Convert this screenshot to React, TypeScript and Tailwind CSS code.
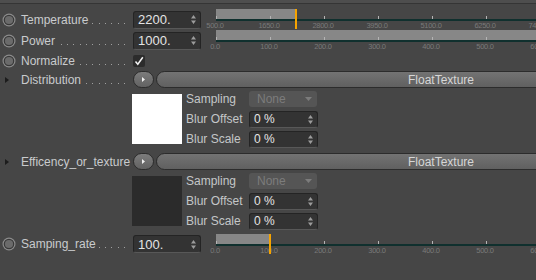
import React from 'react';

const TEMP_TICKS = ['500.0', '1650.0', '2800.0', '3950.0', '5100.0', '6250.0', '7400.0'];
const RATE_TICKS = ['0.0', '100.0', '200.0', '300.0', '400.0', '500.0', '600.0'];

function Radio() {
  return (
    <svg width="14" height="14" viewBox="0 0 14 14">
      <circle cx="7" cy="7" r="6.5" fill="#8c8c8c" />
      <circle cx="7" cy="7" r="5.3" fill="#393939" />
      <circle cx="7" cy="7" r="4.1" fill="#6b6b6b" />
    </svg>
  );
}

function Arrow() {
  return (
    <svg width="4" height="6" viewBox="0 0 4 6">
      <path d="M0 0 L4 3 L0 6 Z" fill="#1c1c1c" />
    </svg>
  );
}

function Spin() {
  return (
    <svg width="5" height="9" viewBox="0 0 5 9">
      <path d="M2.5 0 L5 3.5 H0 Z M2.5 9 L0 5.5 H5 Z" fill="#9c9c9c" />
    </svg>
  );
}

function Leader() {
  // dotted leader, dots right-aligned to the field column
  return (
    <div className="ml-[3px] mt-[7px] h-[1px] min-w-0 flex-1 bg-[repeating-linear-gradient(to_left,#a0a0a0_0_1px,transparent_1px_6.33px)]" />
  );
}

function Label({ icon, text }: { icon: 'radio' | 'arrow'; text: string }) {
  return (
    <div className="flex w-[133px] shrink-0 items-center pr-[8px]">
      <div className={icon === 'radio' ? 'flex w-[21px] shrink-0 pl-[2px]' : 'flex w-[21px] shrink-0 pl-[5px]'}>
        {icon === 'radio' ? <Radio /> : <Arrow />}
      </div>
      <span className="shrink-0 whitespace-nowrap text-[12px] text-[#c9cbcd]">{text}</span>
      <Leader />
    </div>
  );
}

function NumField({ value }: { value: string }) {
  return (
    <div className="flex h-[18px] w-[68px] shrink-0 items-center justify-between rounded-[3px] border border-[#242424] border-b-[#585858] bg-[#333333] pl-[4px] pr-[4px]">
      <span className="text-[13px] leading-none text-[#e4e4e4]">{value}</span>
      <Spin />
    </div>
  );
}

function Slider({ ticks, fill, marker }: { ticks: string[]; fill: number; marker: boolean }) {
  return (
    <div className="relative ml-[15px] h-[21px] flex-1 self-start">
      <div className="h-[10px] bg-[#878787]" style={{ width: fill }} />
      <div className="h-[2px] bg-[#10302e]" />
      {ticks.map((t, i) => (
        <React.Fragment key={t}>
          <div className="absolute top-[7px] h-[3px] w-px bg-[#b4b4b4]" style={{ left: i * 54 }} />
          <span
            className="absolute top-[13px] -translate-x-1/2 whitespace-nowrap text-[7.5px] leading-none tracking-[-0.3px] text-[#7a7a7a]"
            style={{ left: i * 54 - 1 }}
          >
            {t}
          </span>
        </React.Fragment>
      ))}
      {marker && <div className="absolute top-0 h-[20px] w-[2px] bg-[#f6a400]" style={{ left: fill - 1 }} />}
    </div>
  );
}

function TextureRow({ text }: { text: string }) {
  return (
    <div className="flex h-[17px] items-center">
      <Label icon="arrow" text={text} />
      <div className="flex h-[17px] w-[21px] shrink-0 items-center justify-center rounded-full border border-[#2c2c2c] bg-gradient-to-b from-[#7c7c7c] to-[#626262]">
        <svg width="3" height="5" viewBox="0 0 3 5">
          <path d="M0 0 L3 2.5 L0 5 Z" fill="#f0f0f0" />
        </svg>
      </div>
      <div className="ml-[2px] flex h-[17px] w-[570px] shrink-0 items-center justify-center rounded-l-full border border-[#2c2c2c] bg-gradient-to-b from-[#737373] to-[#606060]">
        <span className="text-[12px] text-[#d6d6d6]">FloatTexture</span>
      </div>
    </div>
  );
}

function SubField({ value }: { value: string }) {
  return (
    <div className="flex h-[17px] w-[69px] items-center justify-between rounded-[3px] border border-[#242424] border-b-[#585858] bg-[#333333] pl-[4px] pr-[4px]">
      <span className="text-[12px] leading-none text-[#e4e4e4]">{value}</span>
      <Spin />
    </div>
  );
}

function TextureBlock({ color }: { color: string }) {
  return (
    <div className="flex h-[62px] pl-[132px]">
      <div className={`mt-[6px] h-[50px] w-[50px] shrink-0 ${color}`} />
      <div className="ml-[4px] flex flex-col pt-[1px]">
        <div className="flex h-[20px] items-center">
          <span className="w-[63px] text-[12px] text-[#c4c6c8]">Sampling</span>
          <div className="flex h-[16px] w-[68px] items-center justify-between rounded-[3px] bg-[#555555] pl-[8px] pr-[5px]">
            <span className="text-[12px] leading-none text-[#7c7c7c]">None</span>
            <svg width="7" height="4" viewBox="0 0 7 4">
              <path d="M0 0 H7 L3.5 4 Z" fill="#7c7c7c" />
            </svg>
          </div>
        </div>
        <div className="flex h-[20px] items-center">
          <span className="w-[63px] text-[12px] text-[#c4c6c8]">Blur Offset</span>
          <SubField value="0 %" />
        </div>
        <div className="flex h-[20px] items-center">
          <span className="w-[63px] text-[12px] text-[#c4c6c8]">Blur Scale</span>
          <SubField value="0 %" />
        </div>
      </div>
    </div>
  );
}

export default function App() {
  return (
    <div className="flex h-[280px] w-[536px] flex-col overflow-hidden bg-[#464646] font-['Liberation_Sans',Arial,sans-serif]">
      {/* top edge */}
      <div className="h-[4px] shrink-0 border-b border-[#353535] bg-[#4e4e4e]" />

      <div className="mt-[5px] flex flex-col">
        <div className="flex h-[21px] items-center">
          <Label icon="radio" text="Temperature" />
          <NumField value="2200." />
          <Slider ticks={TEMP_TICKS} fill={80} marker />
        </div>
        <div className="flex h-[21px] items-center">
          <Label icon="radio" text="Power" />
          <NumField value="1000." />
          <Slider ticks={RATE_TICKS} fill={999} marker={false} />
        </div>
        <div className="flex h-[20px] items-center">
          <Label icon="radio" text="Normalize" />
          <div className="flex h-[12px] w-[12px] items-center justify-center rounded-[2px] bg-[#2c2c2c]">
            <svg width="10" height="10" viewBox="0 0 10 10">
              <path d="M1.5 5.5 L3.8 8.3 L8.8 1.2" fill="none" stroke="#f2f2f2" strokeWidth="1.5" />
            </svg>
          </div>
        </div>

        <TextureRow text="Distribution" />
        <TextureBlock color="bg-white" />

        <div className="mt-[3px]">
          <TextureRow text="Efficency_or_texture" />
        </div>
        <TextureBlock color="bg-[#2b2b2b]" />

        <div className="mt-[2px] flex h-[20px] items-center">
          <Label icon="radio" text="Samping_rate" />
          <NumField value="100." />
          <Slider ticks={RATE_TICKS} fill={54} marker />
        </div>
      </div>
    </div>
  );
}
